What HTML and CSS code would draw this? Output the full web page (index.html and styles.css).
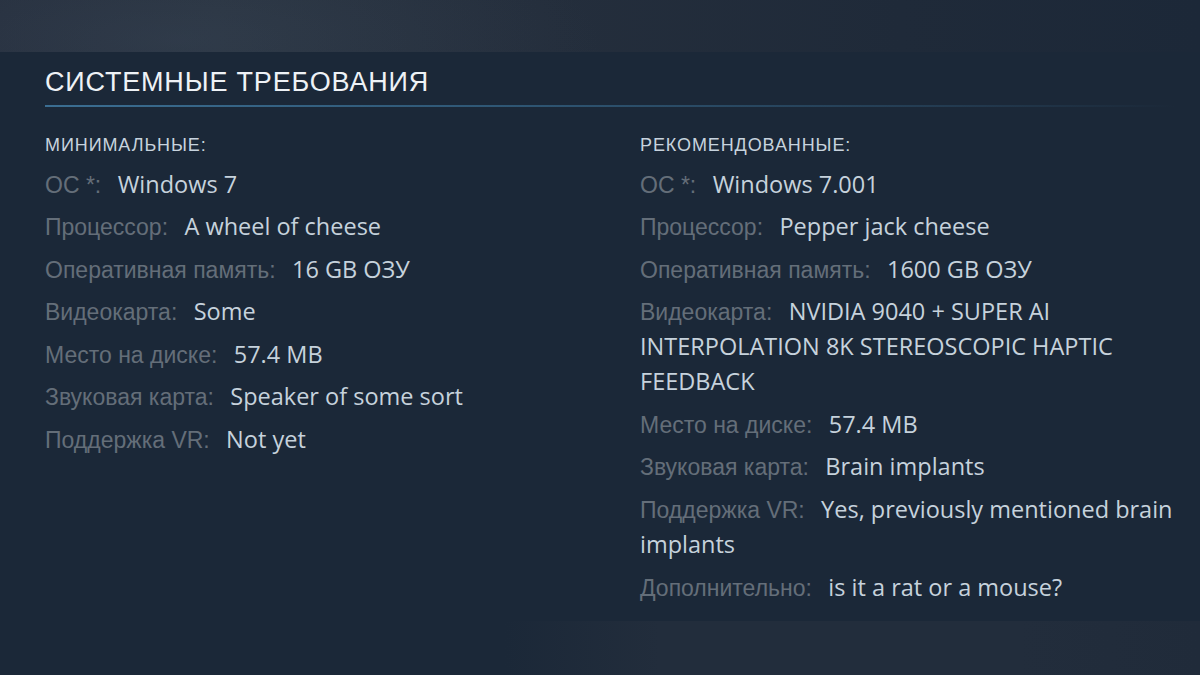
FILE: index.html
```html
<!DOCTYPE html>
<html lang="ru">
<head>
<meta charset="utf-8">
<title>Системные требования</title>
<link rel="stylesheet" href="styles.css">
</head>
<body>
<div class="topband"></div>
<section class="sysreq">
  <h2 class="title">Системные требования</h2>
  <div class="cols">
    <div class="col">
      <div class="subhead">Минимальные:</div>
      <ul class="reqs">
        <li><span class="lbl">ОС *:</span> <span class="val">Windows 7</span></li>
        <li><span class="lbl">Процессор:</span> <span class="val">A wheel of cheese</span></li>
        <li><span class="lbl">Оперативная память:</span> <span class="val">16 GB ОЗУ</span></li>
        <li><span class="lbl">Видеокарта:</span> <span class="val">Some</span></li>
        <li><span class="lbl">Место на диске:</span> <span class="val">57.4 MB</span></li>
        <li><span class="lbl">Звуковая карта:</span> <span class="val">Speaker of some sort</span></li>
        <li><span class="lbl">Поддержка VR:</span> <span class="val">Not yet</span></li>
      </ul>
    </div>
    <div class="col">
      <div class="subhead">Рекомендованные:</div>
      <ul class="reqs">
        <li><span class="lbl">ОС *:</span> <span class="val">Windows 7.001</span></li>
        <li><span class="lbl">Процессор:</span> <span class="val">Pepper jack cheese</span></li>
        <li><span class="lbl">Оперативная память:</span> <span class="val">1600 GB ОЗУ</span></li>
        <li><span class="lbl">Видеокарта:</span> <span class="val">NVIDIA 9040 + SUPER AI INTERPOLATION 8K STEREOSCOPIC HAPTIC FEEDBACK</span></li>
        <li><span class="lbl">Место на диске:</span> <span class="val">57.4 MB</span></li>
        <li><span class="lbl">Звуковая карта:</span> <span class="val">Brain implants</span></li>
        <li><span class="lbl">Поддержка VR:</span> <span class="val">Yes, previously mentioned brain implants</span></li>
        <li><span class="lbl">Дополнительно:</span> <span class="val">is it a rat or a mouse?</span></li>
      </ul>
    </div>
  </div>
</section>
<div class="bottomband"></div>
</body>
</html>
```
FILE: styles.css
```css
html, body {
  margin: 0;
  padding: 0;
}
body {
  background: #1b2838;
  min-height: 675px;
  display: flex;
  flex-direction: column;
  font-family: "Liberation Sans", Arial, sans-serif;
}
.topband {
  height: 52px;
  flex: none;
  background:
    radial-gradient(ellipse 420px 120px at 180px 40px, rgba(60, 74, 94, 0.35), rgba(60, 74, 94, 0) 100%),
    linear-gradient(90deg, #262f3d 0%, #29333f 18%, #242e3c 45%, #1f2a39 75%, #1c2838 100%);
}
.sysreq {
  flex: 1;
  padding: 0 15px 0 45px;
}
.title {
  margin: 15px 10px 0 0;
  padding-bottom: 8px;
  font-size: 27px;
  line-height: 30px;
  font-weight: normal;
  letter-spacing: 0.03em;
  text-transform: uppercase;
  color: #eef2f6;
  border-bottom: 2px solid transparent;
  border-image: linear-gradient(90deg, #3b6e92 0%, #2f5775 40%, rgba(47, 87, 117, 0.4) 80%, rgba(27, 40, 56, 0) 100%) 1;
}
.cols {
  display: grid;
  grid-template-columns: 595px 1fr;
  margin-top: 28px;
}
.subhead {
  font-size: 18px;
  line-height: 20px;
  text-transform: uppercase;
  color: #c7d3de;
  letter-spacing: 0.9px;
  margin-bottom: 11.5px;
}
.reqs {
  list-style: none;
  margin: 0;
  padding: 0;
}
.reqs li {
  font-size: 23px;
  line-height: 34px;
  margin-bottom: 7.6px;
}
.lbl {
  font-family: "Liberation Sans", Arial, sans-serif;
  font-size: 23px;
  color: #646e79;
  margin-right: 10px;
}
.val {
  font-family: "Open Sans", "Noto Sans", sans-serif;
  font-size: 23.5px;
  color: #c6d2dc;
}
.bottomband {
  height: 54px;
  flex: none;
  background: linear-gradient(90deg, rgba(35, 46, 61, 0) 0%, rgba(35, 46, 61, 0) 42%, #222d3c 55%, #222d3c 85%, #202b3a 100%);
}
```
